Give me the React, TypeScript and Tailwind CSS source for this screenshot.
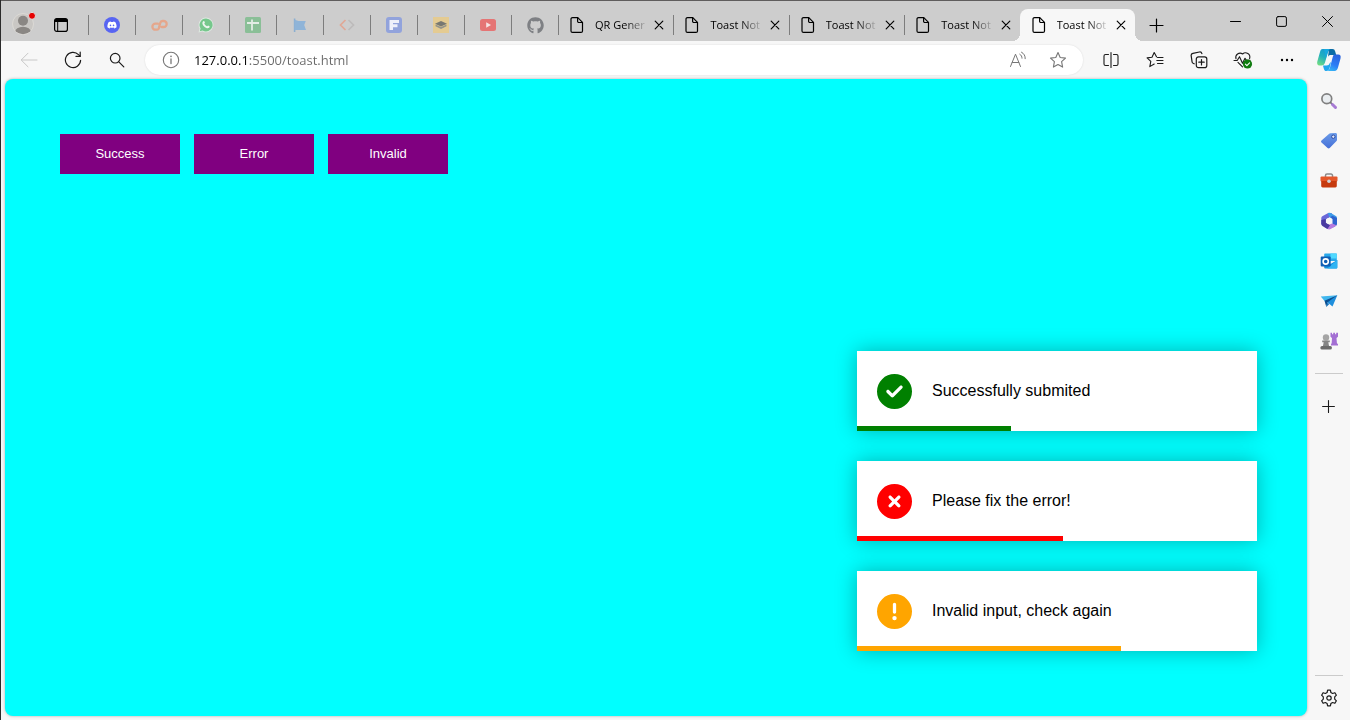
import type { ReactNode } from 'react';
import { FaCircleCheck, FaCircleExclamation, FaCircleXmark, FaDiscord, FaGithub } from 'react-icons/fa6';

/* ---------- Browser icons ---------- */

function Line({ size = 18, box = 18, width = 1, children }: { size?: number; box?: number; width?: number; children: ReactNode }) {
  return (
    <svg width={size} height={size} viewBox={`0 0 ${box} ${box}`} fill="none" stroke="currentColor" strokeWidth={width} strokeLinecap="round" strokeLinejoin="round" aria-hidden="true" className="shrink-0">
      {children}
    </svg>
  );
}

const DocIcon = () => (
  <Line width={1.2}>
    <path d="M4.500 1.600h5.300l4.700 4.700v8.600a1.500 1.500 0 0 1-1.500 1.500H4.500A1.500 1.500 0 0 1 3 14.900V3.100a1.500 1.500 0 0 1 1.500-1.500z" />
    <path d="M9.600 1.800v3.500a1.200 1.200 0 0 0 1.200 1.200h3.500" />
  </Line>
);

const CloseIcon = () => (
  <Line size={10} box={10} width={1.2}>
    <path d="M1.200 1.200l7.600 7.600M8.800 1.200L1.200 8.800" />
  </Line>
);

const StarPath = 'M9 1.600l2.200 4.900 5.300.6-3.900 3.600 1 5.400L9 13.500l-4.600 2.600 1-5.400-3.900-3.600 5.300-.6z';

function Avatar() {
  return (
    <svg width="24" height="24" viewBox="0 0 24 24" aria-hidden="true">
      <defs>
        <clipPath id="avatar-clip">
          <circle cx="11" cy="13" r="10.200" />
        </clipPath>
      </defs>
      <circle cx="11" cy="13" r="10.500" fill="#c9c7c4" stroke="#dcdad6" />
      <g fill="#8a8784" clipPath="url(#avatar-clip)">
        <circle cx="11" cy="9.800" r="5" />
        <ellipse cx="11" cy="21" rx="8" ry="5.200" />
      </g>
      <circle cx="20" cy="4.800" r="3.500" fill="#e60000" stroke="#dedede" strokeWidth="1" />
    </svg>
  );
}

function Copilot() {
  return (
    <svg width="26" height="24" viewBox="0 0 26 24" aria-hidden="true">
      <defs>
        <linearGradient id="cp-left" x1="0.700" y1="0" x2="0.200" y2="1">
          <stop offset="0" stopColor="#1497d4" />
          <stop offset="0.500" stopColor="#23b0bd" />
          <stop offset="1" stopColor="#6fdc83" />
        </linearGradient>
        <linearGradient id="cp-right" x1="0.700" y1="0" x2="0.300" y2="1">
          <stop offset="0" stopColor="#2b62dc" />
          <stop offset="0.600" stopColor="#2d7df6" />
          <stop offset="1" stopColor="#35b6f5" />
        </linearGradient>
      </defs>
      <path d="M6.500 1h9c-2 0-3 1.500-3.600 3.400L9 14.500c-.6 2-1.600 3-3.500 3H3.600C1.400 17.500.7 15.800 1.300 13.500L4 4c.5-1.800 1-3 2.500-3z" fill="url(#cp-left)" />
      <path d="M10 1h6.500c1.500 0 2.200.8 2.700 2.500l1 3.500h-5c-2 0-2.700.6-3.200 2L12.600 4C13 2 11.500 1 10 1z" fill="#0b6ca5" />
      <path d="M8 1h6.500c-1.800.4-2.400 2-2.900 3.800L10 10z" fill="#18a8df" />
      <path d="M18.500 6.500h3.600c2.300 0 3 1.600 2.400 4L22 19.600c-.7 2.300-1.500 3.400-3.500 3.400h-8c2 0 3-1.500 3.500-3.400L16.600 9.600c.4-1.600.8-3.100 1.900-3.100z" fill="url(#cp-right)" />
      <path d="M7 17.500h3.500c1.800 0 2.700-.8 3.300-2.500l1.200-1-1.400 6c-.6 2-1.600 3-3.400 3C8.300 23 8 21.500 7 17.500z" fill="#20a6ee" />
    </svg>
  );
}

/* ---------- Pinned tabs ---------- */

const pinned: { name: string; icon: ReactNode }[] = [
  {
    name: 'Discord',
    icon: (
      <span className="flex size-4 items-center justify-center rounded-full bg-[#5865f2] text-white">
        <FaDiscord size={10} />
      </span>
    ),
  },
  {
    name: 'cPanel',
    icon: (
      <svg width="17" height="13" viewBox="0 0 17 13" fill="none" stroke="#e5a78c" strokeWidth="2.300" strokeLinecap="round" strokeLinejoin="round" aria-hidden="true">
        <path d="M6.800 4.700H4.400a3 3 0 0 0 0 6h1.700c.9 0 1.400-.4 1.700-1.300l1.500-5.600c.3-1.200.9-1.800 2.100-1.800h1.300a3 3 0 0 1 0 6h-2.200" />
      </svg>
    ),
  },
  {
    name: 'WhatsApp',
    icon: (
      <svg width="16" height="16" viewBox="0 0 16 16" aria-hidden="true">
        <path d="M8 .5a7.400 7.400 0 1 1-3.600 13.900L.5 15.500l1.100-3.900A7.400 7.400 0 0 1 8 .5z" fill="#dfe9e2" />
        <path d="M8 1.500a6.500 6.500 0 1 1-3.400 12l-2.800.8.8-2.800A6.500 6.500 0 0 1 8 1.500z" fill="#76c78c" />
        <path d="M5.300 4.300c.5-.5.9-.4 1.100.1l.5 1.200c.1.300-.5.800-.6 1.100.6 1.200 1.500 2 2.700 2.600.4 0 .8-.9 1.100-.8l1.400.7c.5.300-.2 1.700-.9 1.900-2.300.8-6.400-2.500-6.200-5.200 0-.6.400-1.200.9-1.600z" fill="#eef5f0" />
      </svg>
    ),
  },
  {
    name: 'Sheets',
    icon: (
      <svg width="16" height="16" viewBox="0 0 16 16" aria-hidden="true">
        <rect width="16" height="16" rx="1.500" fill="#8abf97" />
        <path d="M2 6h12M7 2.500v11" stroke="#e3ece5" strokeWidth="1.800" />
      </svg>
    ),
  },
  {
    name: 'Flag',
    icon: (
      <svg width="14" height="16" viewBox="0 0 14 16" aria-hidden="true">
        <path d="M.8 1.500h1.600v13.500H.8z" fill="#8aaed0" />
        <path d="M1.500 2.800l4 1.200h7.300l-1.600 4 1.800 5H1.500z" fill="#8fb4d8" />
      </svg>
    ),
  },
  {
    name: 'Code',
    icon: (
      <svg width="16" height="14" viewBox="0 0 16 14" fill="none" strokeWidth="1.700" aria-hidden="true">
        <path d="M6.500 2L1.500 7l5 5" stroke="#e0a896" />
        <path d="M9.500 2l5 5-5 5" stroke="#bdbbbb" />
      </svg>
    ),
  },
  {
    name: 'Forms',
    icon: (
      <svg width="16" height="16" viewBox="0 0 16 16" aria-hidden="true">
        <rect width="16" height="16" rx="3" fill="#92a3dc" />
        <path d="M3.500 3h9.500v3H7v1.300h4.500v3H7V13H3.500z" fill="#eef0fa" />
      </svg>
    ),
  },
  {
    name: 'Layers',
    icon: (
      <svg width="16" height="16" viewBox="0 0 16 16" aria-hidden="true">
        <rect width="16" height="16" fill="#e4cb92" />
        <path d="M8 4l6 2.800L8 9.600 2 6.800z" fill="#777872" />
        <path d="M2.500 7.500L8 10l5.500-2.500v1.700L8 12 2.500 9.200z" fill="#94948b" />
      </svg>
    ),
  },
  {
    name: 'YouTube',
    icon: (
      <svg width="16" height="12" viewBox="0 0 16 12" aria-hidden="true">
        <rect width="16" height="12" rx="2.500" fill="#e57575" />
        <path d="M6.200 3.300L11 6 6.200 8.700z" fill="#f6e4e4" />
      </svg>
    ),
  },
  { name: 'GitHub', icon: <FaGithub size={17} className="text-[#7e8084]" /> },
];

const openTabs = ['QR Gener', 'Toast Not', 'Toast Not', 'Toast Not', 'Toast Not'];

function OpenTab({ title, active }: { title: string; active: boolean }) {
  return (
    <div className={`relative flex h-8 min-w-0 flex-1 items-center ${active ? 'rounded-t-lg bg-[#f7f7f7]' : ''}`}>
      {active && (
        <>
          <span className="absolute bottom-0 -left-2 size-2 bg-[radial-gradient(circle_at_0_0,transparent_8px,#f7f7f7_8px)]" />
          <span className="absolute -right-2 bottom-0 size-2 bg-[radial-gradient(circle_at_100%_0,transparent_8px,#f7f7f7_8px)]" />
        </>
      )}
      <span className={`h-5 w-px shrink-0 ${active ? '' : 'bg-[#7d7d7d]'}`} />
      <button type="button" className="flex min-w-0 flex-1 items-center gap-[9px] pl-[9px] text-left text-[11px] whitespace-nowrap text-black">
        <DocIcon />
        <span className="pr-1 [mask-image:linear-gradient(90deg,#000_55%,transparent)]">{title}</span>
      </button>
      <button type="button" aria-label="Close tab" className="mr-1 flex w-5 shrink-0 items-center justify-center">
        <CloseIcon />
      </button>
    </div>
  );
}

function TabStrip() {
  return (
    <header className="flex h-[41px] border-t border-[#5f5d5d] bg-[#cdcdcd] text-black">
      <div className="flex min-w-0 flex-1 items-center pt-2">
        <button type="button" aria-label="Profile" className="flex w-[35px] shrink-0 justify-end pb-1">
          <Avatar />
        </button>
        <button type="button" aria-label="Tab actions" className="mr-0.5 flex w-[50px] shrink-0 items-center justify-center">
          <svg width="16" height="16" viewBox="0 0 16 16" aria-hidden="true">
            <rect x="1.600" y="1.600" width="12.800" height="12.800" rx="2.200" fill="none" stroke="#000" strokeWidth="1.200" />
            <path d="M1.500 5V4a2.500 2.500 0 0 1 2.500-2.500h8A2.500 2.500 0 0 1 14.500 4v1z" />
            <path d="M4.700 5v9" stroke="#000" />
          </svg>
        </button>
        {pinned.map((tab) => (
          <div key={tab.name} className="flex h-8 w-[47px] shrink-0 items-center">
            <span className="h-5 w-px bg-[#7d7d7d]" />
            <button type="button" aria-label={tab.name} className="flex flex-1 items-center justify-center">
              {tab.icon}
            </button>
          </div>
        ))}
        <div className="flex w-[577px] min-w-0">
          {openTabs.map((title, i) => (
            <OpenTab key={i} title={title} active={i === 4} />
          ))}
        </div>
        <button type="button" aria-label="New tab" className="flex w-[42px] shrink-0 items-center justify-center">
          <Line size={15} box={15} width={1.2}>
            <path d="M7.500 1v13M1 7.500h13" />
          </Line>
        </button>
      </div>
      <div className="flex shrink-0">
        <button type="button" aria-label="Minimize" className="flex w-[46px] items-center justify-center">
          <Line size={11} box={11}>
            <path d="M.5 5.500h10" />
          </Line>
        </button>
        <button type="button" aria-label="Maximize" className="flex w-[46px] items-center justify-center">
          <Line size={11} box={11}>
            <rect x="0.600" y="0.600" width="9.800" height="9.800" rx="1.500" />
          </Line>
        </button>
        <button type="button" aria-label="Close window" className="flex w-[46px] items-center justify-center">
          <Line size={11} box={11}>
            <path d="M.5.5l10 10M10.500.5l-10 10" />
          </Line>
        </button>
      </div>
    </header>
  );
}

/* ---------- Toolbar ---------- */

function ToolButton({ label, className = 'w-11', children }: { label: string; className?: string; children: ReactNode }) {
  return (
    <button type="button" aria-label={label} className={`flex shrink-0 items-center justify-center ${className}`}>
      {children}
    </button>
  );
}

function Toolbar() {
  return (
    <div className="flex h-[38px] items-center pr-px pl-1.5 text-[#1b1b1b]">
      <ToolButton label="Back" className="w-11 text-[#c8c8c8]">
        <Line>
          <path d="M17 9H1.500M8 2.200L1.200 9 8 15.800" />
        </Line>
      </ToolButton>
      <ToolButton label="Refresh">
        <Line width={1.2}>
          <path d="M16.600 9.300A7.600 7.600 0 1 1 14.500 3.700L16 5.200" />
          <path d="M16.200 1.200v4.200H12" />
        </Line>
      </ToolButton>
      <ToolButton label="Search">
        <Line size={16} box={16} width={1.2}>
          <circle cx="6.200" cy="6.200" r="4.800" />
          <path d="M9.800 9.800l5 5" />
        </Line>
      </ToolButton>
      <form className="ml-1.5 flex h-[30px] min-w-0 flex-1 items-center rounded-full bg-white pr-[5px] pl-[17px] text-[#767676] shadow-[0_0_2px_rgba(0,0,0,0.12)]" onSubmit={(e) => e.preventDefault()}>
        <button type="button" aria-label="Site information" className="mr-3.5">
          <Line width={1.1}>
            <circle cx="9" cy="9" r="7.700" />
            <path d="M9 8v4.600" strokeWidth="1.300" />
            <path d="M9 5.400v.1" strokeWidth="1.600" />
          </Line>
        </button>
        <input
          aria-label="Address"
          defaultValue="127.0.0.1:5500/toast.html"
          className="min-w-0 flex-1 bg-[linear-gradient(90deg,#000000_54px,#6a6a6a_54px)] bg-clip-text text-[13px] leading-5 text-transparent outline-none"
        />
        <ToolButton label="Read aloud" className="w-10">
          <Line>
            <path d="M1.500 15.500L6.500 3.200l5 12.300M3.200 11.500h6.600" />
            <path d="M10.800 3.200c1.500.9 2.200 2.300 2.200 4M12.500 1.200c2.600 1.400 3.800 3.600 3.700 6.500" />
          </Line>
        </ToolButton>
        <ToolButton label="Add to favorites" className="w-10">
          <Line width={1.1}>
            <path d={StarPath} />
          </Line>
        </ToolButton>
      </form>
      <span className="w-1.5 shrink-0" />
      <ToolButton label="Split screen">
        <Line width={1.1}>
          <path d="M6.500 3.500H3.500A1.500 1.500 0 0 0 2 5v8a1.500 1.500 0 0 0 1.500 1.500h3M11.500 3.500h3A1.500 1.500 0 0 1 16 5v8a1.500 1.500 0 0 1-1.500 1.500h-3M9 1.500v15" />
        </Line>
      </ToolButton>
      <ToolButton label="Favorites">
        <Line width={1.1}>
          <path d="M10.500 5.800L8.200 1.500 6 6.200l-4.900.7 3.700 3.500-1 5.200 4.400-2.600M11.500 6.500H17M10.800 9.500H17M11.500 12.500H17" />
        </Line>
      </ToolButton>
      <ToolButton label="Collections">
        <Line width={1.2}>
          <rect x="6.300" y="5.800" width="10.500" height="10.800" rx="2.200" />
          <path d="M11.500 8.500v5.400M8.800 11.200h5.400M4.200 12.800L3.500 12.500A2.200 2.200 0 0 1 2 10.300L1.200 4.800A2.200 2.200 0 0 1 2.900 2.300L9.400 1a2.200 2.200 0 0 1 2.500 1.600" />
        </Line>
      </ToolButton>
      <ToolButton label="Browser essentials">
        <Line size={20} box={20} width={1.1}>
          <path d="M3 8.800A4.300 4.300 0 0 1 9.600 4a4.300 4.300 0 0 1 7 4.500M5 12.300l4.500 4.500" />
          <path d="M1 10.500h3.200l2.300-3.800 3 6.600 2.500-5 1.500 2h3.500" />
          <circle cx="14.500" cy="14" r="4.600" fill="#107c10" stroke="none" />
          <path d="M12.400 14.100l1.500 1.500 2.700-2.800" stroke="#fff" />
        </Line>
      </ToolButton>
      <ToolButton label="Settings and more">
        <svg width="14" height="4" viewBox="0 0 14 4" aria-hidden="true">
          <circle cx="2" cy="2" r="1.200" />
          <circle cx="7" cy="2" r="1.200" />
          <circle cx="12" cy="2" r="1.200" />
        </svg>
      </ToolButton>
      <ToolButton label="Copilot" className="w-10">
        <Copilot />
      </ToolButton>
    </div>
  );
}

/* ---------- Sidebar ---------- */

const sidebarApps: { name: string; icon: ReactNode }[] = [
  {
    name: 'Search',
    icon: (
      <>
        <circle cx="6.800" cy="6.700" r="4.900" fill="#e9edf0" stroke="#808080" strokeWidth="1.700" />
        <path d="M10.400 10.300l2 2" stroke="#707070" strokeWidth="1.700" />
        <path d="M12.500 12.500l3 3" stroke="#a77bd4" strokeWidth="3" strokeLinecap="round" />
      </>
    ),
  },
  {
    name: 'Shopping',
    icon: (
      <>
        <path d="M10.300 1.300l5.200-.3c.8 0 1.500.6 1.500 1.400v5.300c0 .5-.2 1-.5 1.300l-6.800 7c-.6.600-1.500.6-2.100 0L1.500 10.500c-.6-.6-.6-1.500 0-2.100L9.200 1.800c.3-.3.700-.5 1.100-.5z" fill="url(#tag)" />
        <circle cx="13.300" cy="4.700" r="1.700" fill="#dfe8fb" stroke="#2c4aa0" />
      </>
    ),
  },
  {
    name: 'Tools',
    icon: (
      <>
        <path d="M5.500 5V3.600A1.500 1.500 0 0 1 7 2.100h4a1.500 1.500 0 0 1 1.500 1.500V5" fill="none" stroke="#8a8a8a" strokeWidth="1.500" />
        <rect x="0.500" y="4.600" width="17" height="5" rx="1" fill="#e4572a" />
        <path d="M1.200 9h15.600v5a1.400 1.400 0 0 1-1.400 1.400H2.600A1.400 1.400 0 0 1 1.200 14z" fill="#c63a0e" />
        <circle cx="9" cy="9.300" r="1.800" fill="#cdd5da" />
      </>
    ),
  },
  {
    name: 'Microsoft 365',
    icon: (
      <>
        <path d="M8.200.9L2.300 4.300A2 2 0 0 0 1.300 6v6.500l4.500-2.300V7.600L10 5l2-4z" fill="#6a68d8" />
        <path d="M7.800 1.100a3 3 0 0 1 3 0l5 3A2.300 2.300 0 0 1 17 6.200V9l-4.700-2.600-3-1.700z" fill="#3d9ce8" />
        <path d="M17 6v6a2 2 0 0 1-1 1.700l-3.500 2V7L10 5.300l2.500-1.500z" fill="#2e63cf" />
        <path d="M16.500 13.200a3 3 0 0 1-.8.800l-5 3c-1 .6-2.200.6-3.200 0L4 14.800l8-3.300z" fill="#b57be0" />
        <path d="M1.300 8v4a2.300 2.300 0 0 0 1.100 1.900l5 3 2.600-3.700L5.800 10.500V7z" fill="#4a3aa0" />
        <circle cx="9" cy="9" r="3" fill="#f7f7f7" />
      </>
    ),
  },
  {
    name: 'Outlook',
    icon: (
      <>
        <path d="M5 1.500h11a.8.800 0 0 1 .8.800V9H4.200V2.300a.8.800 0 0 1 .8-.8z" fill="#28a8ea" />
        <path d="M10.500 1.500h6.300v5h-6.300z" fill="#50d9ff" />
        <path d="M4.200 8.500l6.300 3.500 6.800-4v7.500a1 1 0 0 1-1 1H5.200a1 1 0 0 1-1-1z" fill="#1490df" />
        <path d="M17.300 8l-10 8.500h9a1 1 0 0 0 1-1z" fill="#2fb4f3" />
        <rect x="0.700" y="4.500" width="10" height="10" rx="1" fill="#0f5fb5" />
        <circle cx="5.700" cy="9.500" r="2.600" fill="none" stroke="#fff" strokeWidth="1.600" />
      </>
    ),
  },
  {
    name: 'Drop',
    icon: (
      <>
        <path d="M.8 4.500L17.300 3.300 4.500 9z" fill="#41b7ee" />
        <path d="M4.500 8.800L17.300 3.300 12.500 14.500 8.300 11z" fill="#1f8fdd" />
        <path d="M4.500 8.800L17.300 3.300 7.300 10.500 6.300 15z" fill="#0a4f91" />
        <path d="M7.300 10.500l2 1.500-3 3z" fill="#1172be" />
      </>
    ),
  },
  {
    name: 'Games',
    icon: (
      <>
        <path d="M10.500.7h1.500v1.500h1.200V.7h1.800v1.500h1.200V.7H18v4l-1.500 1.200.4 5 1.100 1.300v1.300h-7v-1.300l.7-1.200.3-5.100-1.500-1.200z" fill="#a36fd3" />
        <circle cx="6" cy="5.500" r="3.200" fill="#a5a5a5" />
        <path d="M2.200 8.500h7.600v1.700H8.300l.8 4.100H2.900l.8-4.100H2.200z" fill="#858585" />
        <rect x="0.400" y="14" width="11.500" height="3.500" rx="1.600" fill="#6b6b6b" />
      </>
    ),
  },
];

function Sidebar() {
  return (
    <aside className="flex w-[43px] shrink-0 flex-col items-center pt-0.5 text-[#1b1b1b]">
      <svg width="0" height="0" className="absolute" aria-hidden="true">
        <defs>
          <linearGradient id="tag" x1="0" y1="0" x2="0" y2="1">
            <stop offset="0" stopColor="#6a9be8" />
            <stop offset="1" stopColor="#4670d8" />
          </linearGradient>
        </defs>
      </svg>
      {sidebarApps.map((app) => (
        <button key={app.name} type="button" aria-label={app.name} className="flex h-10 w-full items-center justify-center">
          <svg width="18" height="18" viewBox="0 0 18 18" aria-hidden="true">
            {app.icon}
          </svg>
        </button>
      ))}
      <div className="mt-3 h-px w-7 bg-[#cbcbcb]" />
      <button type="button" aria-label="Customize sidebar" className="mt-3 flex h-10 w-full items-center justify-center">
        <Line size={13} box={13} width={1.1}>
          <path d="M6.500.6v11.800M.6 6.500h11.800" />
        </Line>
      </button>
      <div className="mt-auto h-px w-7 bg-[#cbcbcb]" />
      <button type="button" aria-label="Settings" className="my-0.5 flex h-10 w-full items-center justify-center">
        <Line width={1.2}>
          <path d="M7.600 1.200h2.800l.5 2.300 1.700 1 2.300-.8 1.500 2.500-1.700 1.700v2.200l1.700 1.700-1.500 2.500-2.300-.8-1.700 1-.5 2.300H7.600l-.5-2.300-1.700-1-2.300.8-1.500-2.500 1.700-1.700V7.900L1.600 6.200l1.500-2.500 2.300.8 1.700-1z" />
          <circle cx="9" cy="9" r="2.200" />
        </Line>
      </button>
    </aside>
  );
}

/* ---------- Page ---------- */

const toasts = [
  { text: 'Successfully submited', progress: 38.5, color: 'text-[#008000]', bar: 'bg-[#008000]', Icon: FaCircleCheck },
  { text: 'Please fix the error!', progress: 51.5, color: 'text-[#ff0000]', bar: 'bg-[#ff0000]', Icon: FaCircleXmark },
  { text: 'Invalid input, check again', progress: 66, color: 'text-[#ffa500]', bar: 'bg-[#ffa500]', Icon: FaCircleExclamation },
];

function ToastPage() {
  return (
    <main className="flex min-w-0 flex-1 flex-col justify-between gap-12 rounded-lg bg-[#00ffff] pt-[55px] pr-[50px] pb-[65px] pl-[55px] font-['Liberation_Sans',Arial,sans-serif] shadow-[0_0_3px_rgba(0,0,0,0.3)]">
      <div className="flex flex-wrap gap-3.5">
        {['Success', 'Error', 'Invalid'].map((label) => (
          <button key={label} type="button" className="h-10 w-[120px] bg-[#800080] text-[13px] text-white">
            {label}
          </button>
        ))}
      </div>
      <div className="flex w-[400px] max-w-full flex-col gap-[30px] self-end">
        {toasts.map(({ text, progress, color, bar, Icon }) => (
          <div key={text} role="status" className="relative flex h-20 items-center bg-white text-base text-black shadow-[0_0_20px_rgba(0,0,0,0.3)]">
            <Icon size={35} className={`mx-5 shrink-0 ${color}`} />
            <span>{text}</span>
            <span className={`absolute bottom-0 left-0 h-[5px] ${bar}`} style={{ width: `${progress}%` }} />
          </div>
        ))}
      </div>
    </main>
  );
}

export default function App() {
  return (
    <div className="flex min-h-screen flex-col border-l border-[#2b2b2b] bg-[#f7f7f7] font-['Open_Sans','Noto_Sans',sans-serif]">
      <TabStrip />
      <Toolbar />
      <div className="flex flex-1">
        <div className="flex min-w-0 flex-1 pb-1 pl-1">
          <ToastPage />
        </div>
        <Sidebar />
      </div>
    </div>
  );
}
